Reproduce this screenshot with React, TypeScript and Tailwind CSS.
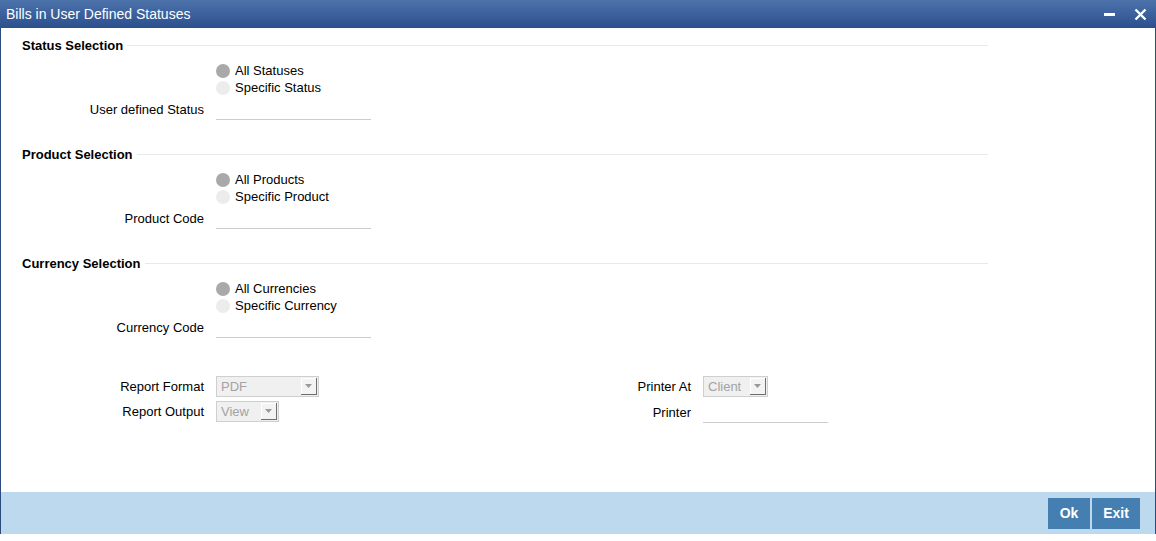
import React from "react";

const font = { fontFamily: '"Liberation Sans", Arial, sans-serif' };

function Radio({ checked, label }: { checked?: boolean; label: string }) {
  return (
    <div className="flex h-[17px] items-center">
      <span
        className={
          "mr-[5px] block h-[14px] w-[14px] rounded-full " +
          (checked ? "bg-[#a9a9a9]" : "bg-[#ececec]")
        }
      />
      <span className="text-[13px] leading-none text-black">{label}</span>
    </div>
  );
}

function Heading({ text }: { text: string }) {
  return (
    <div className="flex h-[16px] items-center pl-[21px] pr-[167px]">
      <span className="text-[13px] font-bold leading-none text-black">{text}</span>
      <span className="ml-[4px] h-px flex-1 bg-[#e9e9e9]" />
    </div>
  );
}

function Section({
  title,
  opt1,
  opt2,
  field,
  mt,
}: {
  title: string;
  opt1: string;
  opt2: string;
  field: string;
  mt: string;
}) {
  return (
    <div className={mt}>
      <Heading text={title} />
      <div className="mt-[9px] pl-[215px]">
        <Radio checked label={opt1} />
        <Radio label={opt2} />
      </div>
      <div className="mt-[3px] flex items-center">
        <div className="w-[203px] text-right text-[13px] leading-none">{field}</div>
        <div className="ml-[12px] h-[21px] w-[155px] border-b border-[#cccccc]" />
      </div>
    </div>
  );
}

function Select({ value, width }: { value: string; width: string }) {
  return (
    <div
      className={
        "flex h-[21px] items-center justify-between border border-[#cfcfcf] bg-[#f0f0f0] pl-[4px] pr-[1px] " +
        width
      }
    >
      <span className="text-[13px] leading-none text-[#a3a3a3]">{value}</span>
      <span className="flex h-[17px] w-[16px] items-center justify-center border-b border-r border-[#6e6e6e] bg-[#f3f3f3] shadow-[inset_1px_1px_0_#ffffff]">
        <svg width="7" height="4" viewBox="0 0 7 4">
          <path d="M0 0 H7 L3.5 4 Z" fill="#9a9a9a" />
        </svg>
      </span>
    </div>
  );
}

export default function App() {
  return (
    <div className="h-[541px] w-[1156px] bg-white" style={font}>
      <div className="flex h-[534px] flex-col">
        <div className="flex h-[28px] items-center justify-between bg-gradient-to-b from-[#4d73ab] to-[#2b4f8e] pl-[6px] pr-[9px]">
          <span className="text-[14px] leading-none text-white">Bills in User Defined Statuses</span>
          <div className="flex items-center gap-[19px]">
            <svg width="11" height="12" viewBox="0 0 11 12">
              <rect x="0" y="5" width="11" height="3" fill="#ffffff" />
            </svg>
            <svg width="13" height="13" viewBox="0 0 13 13">
              <path d="M1.5 1.5 L11.5 11.5 M11.5 1.5 L1.5 11.5" stroke="#ffffff" strokeWidth="2.4" />
            </svg>
          </div>
        </div>
        <div className="flex flex-1 flex-col border-x border-[#2b4a80]">
          <div className="flex-1">
            <Section
              mt="mt-[9px]"
              title="Status Selection"
              opt1="All Statuses"
              opt2="Specific Status"
              field="User defined Status"
            />
            <Section
              mt="mt-[26px]"
              title="Product Selection"
              opt1="All Products"
              opt2="Specific Product"
              field="Product Code"
            />
            <Section
              mt="mt-[26px]"
              title="Currency Selection"
              opt1="All Currencies"
              opt2="Specific Currency"
              field="Currency Code"
            />
            <div className="mt-[38px] flex">
              <div className="flex flex-col gap-[4px]">
                <div className="flex items-center">
                  <div className="w-[203px] text-right text-[13px] leading-none">Report Format</div>
                  <div className="ml-[12px]">
                    <Select value="PDF" width="w-[103px]" />
                  </div>
                </div>
                <div className="flex items-center">
                  <div className="w-[203px] text-right text-[13px] leading-none">Report Output</div>
                  <div className="ml-[12px]">
                    <Select value="View" width="w-[63px]" />
                  </div>
                </div>
              </div>
              <div className="flex flex-col gap-[4px]">
                <div className="flex items-center">
                  <div className="w-[372px] text-right text-[13px] leading-none">Printer At</div>
                  <div className="ml-[12px]">
                    <Select value="Client" width="w-[65px]" />
                  </div>
                </div>
                <div className="flex items-center">
                  <div className="w-[372px] text-right text-[13px] leading-none">Printer</div>
                  <div className="ml-[12px] h-[22px] w-[125px] border-b border-[#cccccc]" />
                </div>
              </div>
            </div>
          </div>
          <div className="flex h-[42px] items-center justify-end gap-[2px] bg-[#bdd9ed] pr-[15px]">
            <button className="h-[31px] w-[42px] bg-[#457eb0] text-[14px] font-bold text-white">Ok</button>
            <button className="h-[31px] w-[48px] bg-[#457eb0] text-[14px] font-bold text-white">Exit</button>
          </div>
        </div>
      </div>
    </div>
  );
}
